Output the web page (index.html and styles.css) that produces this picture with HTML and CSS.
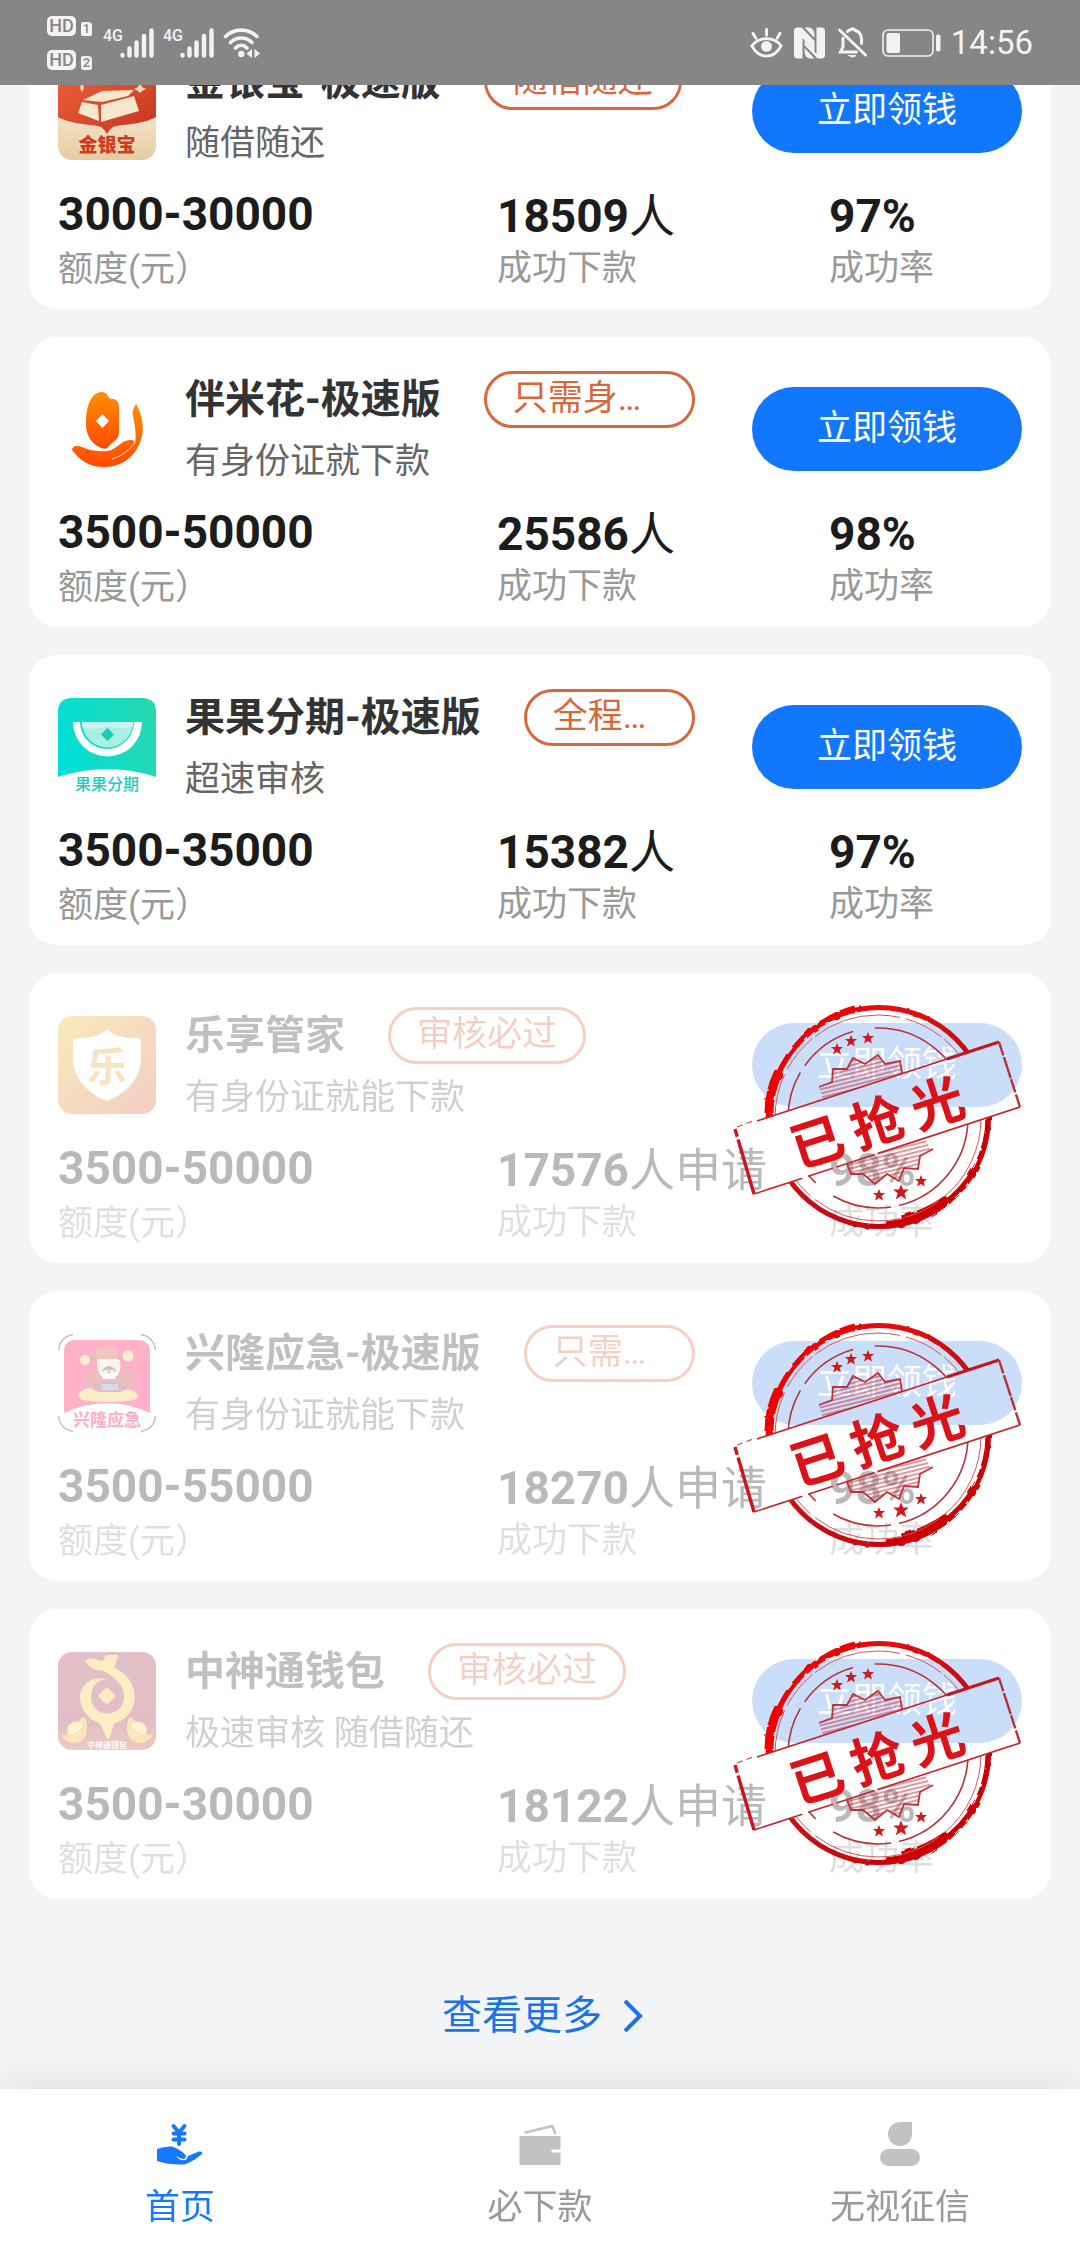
FILE: index.html
```html
<!DOCTYPE html>
<html lang="zh-CN">
<head>
<meta charset="utf-8">
<meta name="viewport" content="width=device-width, initial-scale=1">
<title>首页</title>
<link rel="stylesheet" href="styles.css">
</head>
<body>

<svg class="defs" aria-hidden="true">
  <defs>
    <linearGradient id="g-red" x1="0" y1="0" x2="1" y2="1"><stop offset="0" stop-color="#f0633a"/><stop offset="1" stop-color="#c53521"/></linearGradient>
    <linearGradient id="g-cream" x1="0" y1="0" x2="0" y2="1"><stop offset=".5" stop-color="#f4e6cf"/><stop offset="1" stop-color="#e6cba0"/></linearGradient>
    <linearGradient id="g-orange" x1="0" y1="0" x2="0" y2="1"><stop offset="0" stop-color="#ff9000"/><stop offset="1" stop-color="#ff4800"/></linearGradient>
    <linearGradient id="g-teal" x1="0" y1=".6" x2="1" y2=".4"><stop offset="0" stop-color="#00dfd8"/><stop offset="1" stop-color="#25d8b0"/></linearGradient>
    <linearGradient id="g-amber" x1="0" y1="0" x2="1" y2="1"><stop offset="0" stop-color="#efbe22"/><stop offset=".5" stop-color="#e58a30"/><stop offset="1" stop-color="#db5f3c"/></linearGradient>
    <linearGradient id="g-wine" x1="0" y1="0" x2="0" y2="1"><stop offset="0" stop-color="#a8304a"/><stop offset=".7" stop-color="#9e2a42"/><stop offset="1" stop-color="#c8503c"/></linearGradient>
    <linearGradient id="g-stamp" x1="0" y1="0" x2="1" y2="1"><stop offset=".15" stop-color="#f20505"/><stop offset=".6" stop-color="#c00d14"/><stop offset=".85" stop-color="#d00008"/></linearGradient>
    <pattern id="hatch" width="6" height="4" patternUnits="userSpaceOnUse" patternTransform="rotate(-14)"><path d="M0 1H6" stroke="#c4323c" stroke-width="1"/></pattern>
    <filter id="rough" x="-5%" y="-5%" width="110%" height="110%"><feTurbulence type="fractalNoise" baseFrequency=".1" numOctaves="2" seed="4"/><feDisplacementMap in="SourceGraphic" scale="3"/></filter>
    <clipPath id="ring-top"><path d="M-5 -5H295V32L266 39L0 126L-5 128Z"/></clipPath>
    <clipPath id="ring-bottom"><path d="M21 191L287 104L295 101V235H21Z"/></clipPath>
    <path id="star" d="M0 -6L1.6 -2L6 -2L2.6 1L4 5.5L0 3L-4 5.5L-2.6 1L-6 -2L-1.6 -2Z"/>

    <g id="rings">
      <g filter="url(#rough)">
        <circle cx="146" cy="114" r="109.500" fill="none" stroke="url(#g-stamp)" stroke-width="5"/>
        <path d="M35 116C36 88 46 64 62 44C78 25 98 11 122 5" fill="none" stroke="#f00505" stroke-width="5"/>
        <path d="M36 110C36 94 40 80 46 68" fill="none" stroke="#f00505" stroke-width="9"/>
        <path d="M255 114C255 148 239 182 207 203C191 213 173 219 153 221" fill="none" stroke="#cc0006" stroke-width="5"/>
        <path d="M215 196C201 206 187 213 169 217" fill="none" stroke="#cc0006" stroke-width="9"/>
      </g>
      <circle cx="145" cy="115" r="103" fill="none" stroke="#d4555c" stroke-width="1" stroke-dasharray="90 6 40 3"/>
      <circle cx="145" cy="115" r="90" fill="none" stroke="#b8323a" stroke-width="1.6" stroke-dasharray="120 8 60 22"/>
    </g>

    <symbol id="stamp" viewBox="0 0 290 230">
      <g clip-path="url(#ring-top)"><use href="#rings"/></g>
      <g clip-path="url(#ring-bottom)"><use href="#rings"/></g>
      <path d="M86 84L99 79L100 66L114 66L120 55L132 61L145 52L152 61L167 58L169 71L90 96Z" fill="url(#hatch)"/>
      <path d="M86 84L99 79L100 66L114 66L120 55L132 61L145 52L152 61L167 58L169 70" fill="none" stroke="#c0323a" stroke-width="1.8"/>
      <path d="M114 161L118 171L130 171L142 181L154 171L166 178L171 165L185 166L187 153L198 147L192 136Z" fill="url(#hatch)"/>
      <path d="M114 161L118 171L130 171L142 181L154 171L166 178L171 165L185 166L187 153L200 146" fill="none" stroke="#c0323a" stroke-width="1.8"/>
      <path d="M24 118L266 39" fill="none" stroke="#c8232b" stroke-width="1.6"/>
      <path d="M214 56L266 39" fill="none" stroke="#c4161e" stroke-width="3"/>
      <path d="M266 39L287 104" fill="none" stroke="#b8323a" stroke-width="2.4" stroke-dasharray="14 2 22 1"/>
      <path d="M287 104L21 191" fill="none" stroke="#c8232b" stroke-width="1.6" stroke-dasharray="150 3 40 4 26 6"/>
      <path d="M2 126L21 191" fill="none" stroke="#cc141c" stroke-width="3.4" stroke-dasharray="8 3 80"/>
      <path d="M4 124L20 118" stroke="#d4555c" stroke-width="1.2" stroke-dasharray="6 4"/>
      <g fill="#d01820">
        <use href="#star" x="104" y="46"/><use href="#star" x="118" y="38"/><use href="#star" x="135" y="35"/>
        <use href="#star" x="146" y="192"/><use href="#star" transform="translate(168 189) scale(1.3)"/><use href="#star" x="188" y="178"/>
      </g>
    </symbol>

    <symbol id="signal" viewBox="0 0 34 30">
      <path d="M2.500 27.500V27M9.500 27.500V20.500M16.500 27.500V14.500M24 27.500V8M31.500 27.500V2.500" stroke="currentColor" stroke-width="4.400" stroke-linecap="round"/>
    </symbol>
    <symbol id="nugget" viewBox="0 0 30 28">
      <path d="M2 18C8 20 10 17 14 12C18 7 22 2 25 1C28 4 29 12 27 19C24 27 14 29 8 25C5 23 3 21 2 18Z" fill="#efb21c"/>
      <ellipse cx="16" cy="13" rx="8" ry="7" fill="#f7dc5e" transform="rotate(-30 16 13)"/>
      <path d="M3 19C10 22 22 18 26 8" fill="none" stroke="#d98e18" stroke-width="1.500"/>
    </symbol>
  </defs>
</svg>

<header class="statusbar">
  <div class="status-group">
    <div class="hd-stack">
      <div class="hd"><span class="hd-badge">HD</span><span class="hd-sim">1</span></div>
      <div class="hd"><span class="hd-badge">HD</span><span class="hd-sim">2</span></div>
    </div>
    <div class="network"><span class="network-type">4G</span><svg class="signal"><use href="#signal"/></svg></div>
    <div class="network"><span class="network-type">4G</span><svg class="signal"><use href="#signal"/></svg></div>
    <svg class="wifi" viewBox="0 0 38 32" fill="none" stroke="currentColor" stroke-width="3.600" stroke-linecap="round">
      <path d="M2.500 9.500C11 1 25.500 1 34 9.500M7.500 15.500C13.500 9.500 23 9.500 29 15.500M12.500 21C16 17.500 20.500 17.500 24 21"/>
      <circle cx="18.300" cy="27" r="3.200" fill="currentColor" stroke="none"/>
      <path d="M29 22V31L23.500 26.500ZM31.500 22L37 26.500L31.500 31Z" fill="currentColor" stroke="none"/>
    </svg>
  </div>
  <div class="status-group status-right">
    <svg class="s-icon" viewBox="0 0 34 32" fill="none" stroke="currentColor" stroke-width="3" stroke-linecap="round">
      <path d="M2 19C9 9 25 9 32 19C25 33 9 33 2 19Z"/><circle cx="17" cy="19.500" r="5.600" fill="currentColor" stroke="none"/>
      <path d="M17 2V8M3 6L6 11M31 6L28 11"/>
    </svg>
    <svg class="s-icon" viewBox="0 0 32 32">
      <path d="M4 .500H8L21 14V26L9 11V31.500H4Q.500 31.500 .500 28V4Q.500 .500 4 .500Z" fill="currentColor"/>
      <path d="M11 .500H16Q21 2 21 8V11Z" fill="currentColor"/>
      <path d="M28 31.500H24L11 18V14L23 27V.500H28Q31.500 .500 31.500 4V28Q31.500 31.500 28 31.500Z" fill="currentColor"/>
      <path d="M21 31.500H16Q11 30 11 24V21Z" fill="currentColor"/>
    </svg>
    <svg class="s-icon" viewBox="0 0 32 32" fill="none" stroke="currentColor" stroke-width="3" stroke-linecap="round">
      <path d="M3 3L29 28"/><path d="M6.500 11V20L4 25H20M11 4.500C13 3 14 3 14.500 2.500C15 1.500 17.500 1.500 18 3C23 4.500 25 8 25 12V16.500"/>
      <path d="M12.500 28.500H19.500Q16 31.500 12.500 28.500Z" fill="currentColor" stroke-width="1"/>
    </svg>
    <svg class="battery" viewBox="0 0 59 30">
      <rect x="1" y="2" width="50" height="26" rx="5" fill="none" stroke="currentColor" stroke-width="1.600"/>
      <rect x="4.500" y="5" width="13.500" height="20" rx="2" fill="currentColor"/><rect x="54" y="6.500" width="4.500" height="17" rx="2" fill="currentColor"/>
    </svg>
    <time class="clock">14:56</time>
  </div>
</header>

<main class="page">
  <article class="card">
    <div class="card-head">
      <svg class="logo" viewBox="0 0 98 98" role="img" aria-label="金银宝">
        <rect width="98" height="98" rx="14" fill="url(#g-cream)"/>
        <path d="M0 55V14Q0 0 14 0H84Q98 0 98 14V55C84 63 62 62 55 65Q52 67 49 72Q46 67 43 65C36 62 14 63 0 55Z" fill="url(#g-red)"/>
        <path d="M25 38L44 29L76 28L70 34L44 40Z M24 40L40 43L41 59L20 51Z M43 43L76 34L81 49L43 60Z" fill="#f6e7cf"/>
        <path d="M24 19L26 26L24 30L22 26ZM82 20L84 25L88 27L84 29L82 31L80 29L76 27L80 25Z" fill="#f6d9b8"/>
        <text x="49" y="90" class="logo-text size-19" fill="#d2391f">金银宝</text>
      </svg>
      <div class="info">
        <div class="title-row"><h2 class="title">金银宝-极速版</h2><span class="tag">随借随还</span></div>
        <p class="sub">随借随还</p>
      </div>
      <button class="apply" type="button">立即领钱</button>
    </div>
    <dl class="stats">
      <div class="stat"><dd class="value">3000-30000</dd><dt class="label">额度(元）</dt></div>
      <div class="stat"><dd class="value">18509<span class="unit">人</span></dd><dt class="label">成功下款</dt></div>
      <div class="stat"><dd class="value">97%</dd><dt class="label">成功率</dt></div>
    </dl>
  </article>

  <article class="card">
    <div class="card-head">
      <svg class="logo" viewBox="0 0 98 98" role="img" aria-label="伴米花">
        <path d="M44 12C48 12 50 16 52 19C58 18 61 22 61 27V52C61 60 54 62 51 66C48 70 45 69 41 67C32 62 28 54 28 44C28 34 29 26 33 19C36 14 40 12 44 12ZM44.500 34L38 41L44.500 48L51 41Z" fill="url(#g-orange)" fill-rule="evenodd"/>
        <path d="M14 70C14 66 19 65 24 67C33 71 42 72 50 71C58 70 63 60 72 60C76 60 77 61 77 64C79 52 76 42 75 36C74 31 76 27 78 24C84 34 86 46 84 56C80 74 66 87 46 87C30 87 22 80 14 70Z" fill="url(#g-orange)"/>
        <path d="M62 60C68 58 74 56 73 48L72 40" fill="none" stroke="#fff" stroke-width="5"/>
        <path d="M54 79C64 76 72 70 77 62" fill="none" stroke="#ffe2c8" stroke-width="1"/>
      </svg>
      <div class="info">
        <div class="title-row"><h2 class="title">伴米花-极速版</h2><span class="tag tag-fill">只需身…</span></div>
        <p class="sub">有身份证就下款</p>
      </div>
      <button class="apply" type="button">立即领钱</button>
    </div>
    <dl class="stats">
      <div class="stat"><dd class="value">3500-50000</dd><dt class="label">额度(元）</dt></div>
      <div class="stat"><dd class="value">25586<span class="unit">人</span></dd><dt class="label">成功下款</dt></div>
      <div class="stat"><dd class="value">98%</dd><dt class="label">成功率</dt></div>
    </dl>
  </article>

  <article class="card">
    <div class="card-head">
      <svg class="logo" viewBox="0 0 98 98" role="img" aria-label="果果分期">
        <path d="M0 79V14Q0 0 14 0H84Q98 0 98 14V79Q49 63 0 79Z" fill="url(#g-teal)"/>
        <path d="M15 24A34.500 34.500 0 0 0 84 24H76A26.800 26.800 0 0 1 22 24Z" fill="#fff"/>
        <path d="M24 24A25 25 0 0 0 75 24Z" fill="#a9efe3"/><path d="M24 24H75V29Q62 32 50 28Q36 33 24 29Z" fill="#cbf6ef"/>
        <path d="M49.500 30L56 36.500L49.500 43L43 36.500Z" fill="#14cdb4"/>
        <text x="49" y="92" class="logo-text size-16" fill="#1ccdc0">果果分期</text>
      </svg>
      <div class="info">
        <div class="title-row"><h2 class="title">果果分期-极速版</h2><span class="tag tag-fill">全程…</span></div>
        <p class="sub">超速审核</p>
      </div>
      <button class="apply" type="button">立即领钱</button>
    </div>
    <dl class="stats">
      <div class="stat"><dd class="value">3500-35000</dd><dt class="label">额度(元）</dt></div>
      <div class="stat"><dd class="value">15382<span class="unit">人</span></dd><dt class="label">成功下款</dt></div>
      <div class="stat"><dd class="value">97%</dd><dt class="label">成功率</dt></div>
    </dl>
  </article>

  <article class="card sold-out">
    <div class="card-head">
      <svg class="logo" viewBox="0 0 98 98" role="img" aria-label="乐享管家">
        <rect width="98" height="98" rx="14" fill="url(#g-amber)"/>
        <path d="M49 13C54 19 64 22 78 22Q83 22 83 27V42C83 62 68 78 49 85C30 78 15 62 15 42V27Q15 22 20 22C34 22 44 19 49 13Z" fill="#fff"/>
        <text x="49" y="65" class="logo-text size-40" fill="#eaa82c">乐</text>
      </svg>
      <div class="info">
        <div class="title-row"><h2 class="title">乐享管家</h2><span class="tag">审核必过</span></div>
        <p class="sub">有身份证就能下款</p>
      </div>
      <button class="apply" type="button" disabled>立即领钱</button>
    </div>
    <dl class="stats">
      <div class="stat"><dd class="value">3500-50000</dd><dt class="label">额度(元）</dt></div>
      <div class="stat"><dd class="value">17576<span class="unit">人申请</span></dd><dt class="label">成功下款</dt></div>
      <div class="stat"><dd class="value">98%</dd><dt class="label">成功率</dt></div>
    </dl>
    <svg class="stamp" viewBox="0 0 290 230"><use href="#stamp"/><text class="stamp-text" transform="translate(144 119) rotate(-18)" x="-63 0 63" y="20">已抢光</text></svg>
  </article>

  <article class="card sold-out">
    <div class="card-head">
      <svg class="logo" viewBox="0 0 98 98" role="img" aria-label="兴隆应急">
        <path d="M.500 16Q2 3 15 .500M83 .500Q96 3 97.500 16M97.500 82Q96 95 83 97.500M15 97.500Q2 95 .500 82" fill="none" stroke="#222" stroke-width="1.400"/>
        <path d="M6 79V18Q6 6 18 6H80Q92 6 92 18V79Q49 59 6 79Z" fill="#ff0548"/>
        <path d="M26 52L29 36Q34 40 42 37H60Q68 40 73 34L78 54L66 60H34Z" fill="#c2283c"/>
        <path d="M22 58Q30 52 40 55Q60 50 76 57Q84 62 76 66Q50 70 24 66Q18 62 22 58Z" fill="#f2c84c"/>
        <path d="M38 48H64L70 55L62 58H40L34 55Z" fill="#8c3448"/><path d="M44 50H60V56H44Z" fill="#7f86b8"/>
        <path d="M39 26Q50 18 62 26Q64 38 57 44H45Q38 38 39 26Z" fill="#f7d9b8"/>
        <path d="M42 27Q45 24 48 27M54 27Q57 24 60 27" fill="none" stroke="#fff" stroke-width="2"/>
        <path d="M44 37Q51 28 58 37Q51 33 44 37Z" fill="#5a3030" stroke="#5a3030"/>
        <path d="M37 15Q50 11 60 15L59 21L66 22V25H32V22L38 21Z" fill="#d8402f"/><path d="M31 22H38V26H31ZM60 22H67V26H60Z" fill="#7a3d2c"/>
        <circle cx="27" cy="26" r="5" fill="#f3cd62"/><circle cx="70" cy="22" r="5.500" fill="#f3cd62"/>
        <path d="M45 39H57V45H45Z" fill="#fff"/><circle cx="51" cy="38" r="1.500" fill="#8c3448"/>
        <text x="49" y="92" class="logo-text size-17" fill="#ff0548">兴隆应急</text>
      </svg>
      <div class="info">
        <div class="title-row"><h2 class="title">兴隆应急-极速版</h2><span class="tag tag-fill">只需…</span></div>
        <p class="sub">有身份证就能下款</p>
      </div>
      <button class="apply" type="button" disabled>立即领钱</button>
    </div>
    <dl class="stats">
      <div class="stat"><dd class="value">3500-55000</dd><dt class="label">额度(元）</dt></div>
      <div class="stat"><dd class="value">18270<span class="unit">人申请</span></dd><dt class="label">成功下款</dt></div>
      <div class="stat"><dd class="value">98%</dd><dt class="label">成功率</dt></div>
    </dl>
    <svg class="stamp" viewBox="0 0 290 230"><use href="#stamp"/><text class="stamp-text" transform="translate(144 119) rotate(-18)" x="-63 0 63" y="20">已抢光</text></svg>
  </article>

  <article class="card sold-out">
    <div class="card-head">
      <svg class="logo" viewBox="0 0 98 98" role="img" aria-label="中神通钱包">
        <rect width="98" height="98" rx="14" fill="url(#g-wine)"/>
        <path d="M27 9C34 3 39 9 44 9C48 9 45 4 49 3H60C60 8 56 11 57 16C69 22 77 32 77 46A28 28 0 0 1 57 71C54 75 54 82 50 88C46 82 45 75 41 71A28 28 0 0 1 22 45C22 34 33 23 48 27C38 28 33 36 33 45A16.500 16.500 0 0 0 66 45C66 32 56 25 46 19C38 18 32 17 27 9Z" fill="#f8c63a"/>
        <path d="M49 35L58 44L49 53L40 44Z" fill="#f8c63a"/>
        <use href="#nugget" x="1" y="64" width="30" height="28"/><use href="#nugget" transform="translate(97 64) scale(-1 1)" width="30" height="28"/>
        <text x="49" y="96" class="logo-text size-8" fill="#fff">中神通钱包</text>
      </svg>
      <div class="info">
        <div class="title-row"><h2 class="title">中神通钱包</h2><span class="tag">审核必过</span></div>
        <p class="sub">极速审核 随借随还</p>
      </div>
      <button class="apply" type="button" disabled>立即领钱</button>
    </div>
    <dl class="stats">
      <div class="stat"><dd class="value">3500-30000</dd><dt class="label">额度(元）</dt></div>
      <div class="stat"><dd class="value">18122<span class="unit">人申请</span></dd><dt class="label">成功下款</dt></div>
      <div class="stat"><dd class="value">98%</dd><dt class="label">成功率</dt></div>
    </dl>
    <svg class="stamp" viewBox="0 0 290 230"><use href="#stamp"/><text class="stamp-text" transform="translate(144 119) rotate(-18)" x="-63 0 63" y="20">已抢光</text></svg>
  </article>

  <a class="more" href="#more">查看更多
    <svg class="chevron" viewBox="0 0 20 34" fill="none" stroke="currentColor" stroke-width="4"><path d="M2 2L17 17L2 32"/></svg>
  </a>
</main>

<nav class="tabbar">
  <a class="tab active" href="#home">
    <svg class="tab-icon" viewBox="0 0 46 44">
      <path d="M16.500 4L22 10.500L27.500 4M22 10V22M16.500 11.500H27.500M16.500 17.500H27.500" fill="none" stroke="currentColor" stroke-width="4" stroke-linecap="round"/>
      <path d="M0 27Q8 24 15 24.500C20 26 28 31 29 34Q29 37 26 37Q22 36 19 34Q22 39 29 38L31 34L42 29.500Q46 29 45 32Q36 40 27 42.500Q12 43 0 39Z" fill="currentColor"/>
    </svg>
    <span>首页</span>
  </a>
  <a class="tab" href="#loans">
    <svg class="tab-icon" viewBox="0 0 46 44">
      <path d="M8.500 10.500L35.500 4L38 11" fill="none" stroke="#c2c2c2" stroke-width="2.400" stroke-linecap="round"/>
      <path d="M2.500 14H43.500V27.500H34.500V30.500H43.500V43H2.500Z" fill="#c2c2c2"/>
    </svg>
    <span>必下款</span>
  </a>
  <a class="tab" href="#credit">
    <svg class="tab-icon" viewBox="0 0 46 44">
      <path d="M23 0H35V12A12 12 0 1 1 23 0Z" fill="#c2c2c2"/><rect x="3" y="27" width="40" height="17" rx="8.500" fill="#c2c2c2"/>
    </svg>
    <span>无视征信</span>
  </a>
</nav>
</body>
</html>
```
FILE: styles.css
```css
* { box-sizing: border-box; }

body {
  margin: 0;
  background: #f2f4f6;
  color: #1c1c1c;
  font-family: Roboto, "Noto Sans CJK SC", sans-serif;
  font-size: 35px;
  line-height: 50px;
}

h2, p, dl, dd { margin: 0; }
a { text-decoration: none; }
svg { display: block; flex: none; }
.defs { position: absolute; width: 0; height: 0; }

/* status bar */
.statusbar {
  position: fixed;
  top: 0;
  left: 0;
  right: 0;
  z-index: 2;
  display: flex;
  justify-content: space-between;
  align-items: center;
  height: 85px;
  padding: 0 47px;
  background: #868686;
  color: #f3f3f3;
}
.status-group { display: flex; align-items: center; gap: 11px; }
.status-right { gap: 10px; }
.hd-stack { display: grid; gap: 14px; }
.hd { display: flex; align-items: flex-end; gap: 5px; }
.hd-badge, .hd-sim {
  background: #f3f3f3;
  color: #868686;
  font-weight: 500;
  text-align: center;
}
.hd-badge { width: 29px; height: 20px; border-radius: 5px; font-size: 18px; line-height: 20px; }
.hd-sim { width: 11px; height: 14px; border-radius: 2px 4px 2px 2px; font-size: 13px; line-height: 14px; }
.network { display: flex; align-items: flex-start; width: 49px; }
.network-type {
  width: 17px;
  font-size: 16px;
  font-weight: 500;
  line-height: 16px;
}
.signal { width: 34px; height: 30px; }
.wifi { width: 38px; height: 32px; }
.s-icon { width: 33px; height: 32px; }
.battery { width: 59px; height: 30px; margin-left: 3px; }
.clock { font-size: 33px; line-height: 40px; }

/* product cards */
.page {
  display: flex;
  flex-direction: column;
  gap: 28px;
  padding: 19px 29px 155px;
}
.card {
  position: relative;
  padding: 34px 29px 14px;
  border-radius: 28px;
  background: #fff;
}
.card-head { display: flex; align-items: center; }
.logo { width: 98px; height: 98px; margin-right: 29px; }
.info { flex: 1; min-width: 0; margin-right: 57px; }
.title-row { display: flex; align-items: center; gap: 43px; }
.title {
  color: #333;
  font-size: 40px;
  line-height: 57px;
  font-weight: 700;
  white-space: nowrap;
}
.tag {
  height: 57px;
  padding: 0 26px;
  border: 3px solid #d9673b;
  border-radius: 29px;
  color: #d9673b;
  line-height: 50px;
  white-space: nowrap;
}
.tag-fill { flex: 1; }
.sub { margin-top: 9px; color: #666; }
.apply {
  flex: none;
  width: 270px;
  height: 84px;
  padding: 0;
  border: 0;
  border-radius: 42px;
  background: #1177ff;
  color: #fff;
  font: inherit;
}
.stats {
  display: grid;
  grid-template-columns: 439fr 332fr 193fr;
  margin-top: 20px;
}
.stat { display: flex; flex-direction: column; gap: 6px; }
.value { font-size: 46px; font-weight: 700; white-space: nowrap; }
.stat + .stat { gap: 1px; }
.stat + .stat .value { line-height: 54px; }
.unit { font-weight: 400; }
.label { color: #999; }

.sold-out .card-head, .sold-out .stats { opacity: .3; }
.sold-out .apply { background: #5291ee; }
.stamp {
  position: absolute;
  top: 30px;
  right: 28px;
  width: 290px;
  height: 230px;
}
.stamp-text { fill: #dc1219; font-size: 53px; font-weight: 700; text-anchor: middle; }

.logo-text { font-weight: 700; text-anchor: middle; }
.size-8 { font-size: 8px; }
.size-16 { font-size: 16px; font-weight: 500; }
.size-17 { font-size: 17px; font-weight: 900; }
.size-19 { font-size: 19px; font-weight: 900; }
.size-40 { font-size: 40px; }

.more {
  display: flex;
  justify-content: center;
  align-items: center;
  gap: 21px;
  height: 162px;
  padding: 16px 0 0 5px;
  color: #1a74e8;
  font-size: 40px;
}
.chevron { width: 20px; height: 34px; }

/* bottom navigation */
.tabbar {
  position: fixed;
  left: 0;
  right: 0;
  bottom: 0;
  z-index: 2;
  display: grid;
  grid-template-columns: repeat(3, 1fr);
  height: 155px;
  background: #fff;
  box-shadow: 0 0 43px rgba(0, 0, 0, .1);
}
.tab {
  display: flex;
  flex-direction: column;
  align-items: center;
  gap: 17px;
  padding-top: 33px;
  color: #999;
}
.tab.active { color: #1677ff; }
.tab-icon { width: 46px; height: 44px; }
```
